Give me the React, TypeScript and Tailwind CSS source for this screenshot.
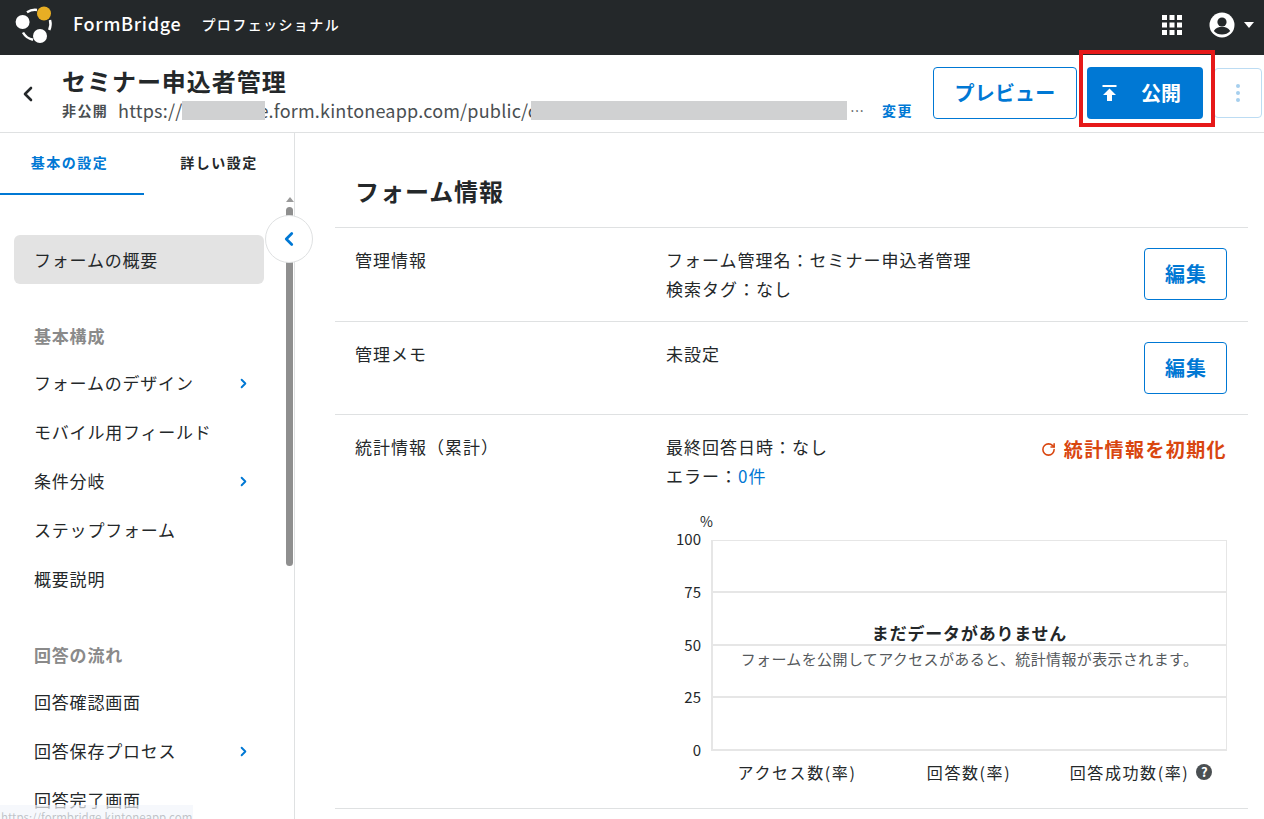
import { ChevronLeft, ChevronRight, RotateCw } from "lucide-react";

const blue = "text-[#0078d4]";

function Logo() {
  return (
    <svg width="40" height="40" viewBox="0 0 40 40" className="block" fill="none">
      <path d="M12 7.200A15 15 0 0 1 22 5" stroke="#fff" strokeWidth="2.500" />
      <path d="M35 15A15 15 0 0 1 34.200 25" stroke="#fff" strokeWidth="2.500" />
      <path d="M8 27.500A15 15 0 0 0 18 34.800" stroke="#fff" strokeWidth="2.500" />
      <circle cx="29" cy="8.500" r="7" fill="#e8ae24" />
      <circle cx="7.600" cy="17" r="7" fill="#fff" />
      <circle cx="25" cy="31" r="7" fill="#fff" />
    </svg>
  );
}

function GridIcon() {
  return (
    <svg width="20" height="20" viewBox="0 0 20 20" fill="#fff" className="block">
      {[0, 7.5, 15].map((x) =>
        [0, 7.5, 15].map((y) => <rect key={`${x}-${y}`} x={x} y={y} width="5" height="5" />)
      )}
    </svg>
  );
}

function UserIcon() {
  return (
    <svg width="26" height="26" viewBox="0 0 26 26" className="block">
      <circle cx="13" cy="13" r="12.5" fill="#fff" />
      <circle cx="13" cy="10" r="4.6" fill="#24282a" />
      <path d="M4.8 19c1.8-3 5-4.2 8.2-4.2s6.400 1.200 8.200 4.200c-2 2.300-5 3.600-8.200 3.600s-6.200-1.300-8.200-3.600z" fill="#24282a" />
    </svg>
  );
}

function Nav({ label, arrow }: { label: string; arrow?: boolean }) {
  return (
    <div className="h-[49px] pl-5 pr-[13px] flex items-center justify-between text-[17px] tracking-[0.8px] text-[#24282a]">
      <span>{label}</span>
      {arrow && <ChevronRight size={15} strokeWidth={3} className={`mt-[1px] ${blue}`} />}
    </div>
  );
}

function SectionHead({ label }: { label: string }) {
  return <div className="mt-[31px] h-[43px] pl-5 pb-[1px] flex items-center text-[17px] font-bold tracking-[0.8px] text-[#8a8a8a]">{label}</div>;
}

function EditButton() {
  return (
    <button className={`w-[83px] h-[52px] shrink-0 rounded border border-[#0078d4] bg-white pl-[1px] text-xl font-bold tracking-[0.05em] ${blue}`}>編集</button>
  );
}

function Sidebar() {
  return (
    <aside className="relative w-[295px] shrink-0 border-r border-[#dfe1e2]">
      <div className="flex h-[62px] text-sm font-bold">
        <div className={`w-[144px] border-b-2 border-[#0078d4] flex items-center justify-center pb-[3px] pr-[5px] tracking-[0.11em] ${blue}`}>基本の設定</div>
        <div className="w-[150px] flex items-center justify-center pb-1 tracking-[0.11em] text-[#24282a]">詳しい設定</div>
      </div>
      <div className="pt-10 pl-[14px] pr-[30px]">
        <div className="rounded-md bg-[#e3e3e3]">
          <Nav label="フォームの概要" />
        </div>
        <SectionHead label="基本構成" />
        <Nav label="フォームのデザイン" arrow />
        <Nav label="モバイル用フィールド" />
        <Nav label="条件分岐" arrow />
        <Nav label="ステップフォーム" />
        <Nav label="概要説明" />
        <SectionHead label="回答の流れ" />
        <Nav label="回答確認画面" />
        <Nav label="回答保存プロセス" arrow />
        <Nav label="回答完了画面" />
      </div>

      <div className="absolute left-[286px] top-[64px] w-0 h-0 border-x-[4px] border-x-transparent border-b-[5px] border-b-[#9a9a9a]" />
      <div className="absolute left-[286px] top-[74px] w-[7px] h-[359px] rounded-full bg-[#8f8f8f]" />
      <div className="absolute left-[265px] top-[82px] w-12 h-12 rounded-full bg-white border border-[#dfe1e2] flex items-center justify-center">
        <ChevronLeft size={22} strokeWidth={3} className={blue} />
      </div>
    </aside>
  );
}

function Chart() {
  return (
    <div className="mt-[21px] pr-[21px]">
      <div className="h-[18px] flex items-center pl-[34px] text-sm leading-none tracking-normal text-[#24282a]">%</div>
      <div className="flex mt-[10px]">
        <div className="w-[45px] h-[211px] flex flex-col justify-between items-end pr-[10px] text-[15px] tracking-normal text-[#24282a]">
          {["100", "75", "50", "25", "0"].map((v) => (
            <div key={v} className="h-0 flex items-center">{v}</div>
          ))}
        </div>
        <div className="relative flex-1 h-[211px] border-2 border-[#e6e6e6] border-t-[1px] border-r-[1px] flex flex-col">
          <div className="flex-1 border-b-2 border-[#e6e6e6]" />
          <div className="flex-1 border-b-2 border-[#e6e6e6]" />
          <div className="flex-1 border-b-2 border-[#e6e6e6]" />
          <div className="flex-1" />
          <div className="absolute inset-x-0 top-[80px] text-center">
            <div className="text-[17px] leading-6 font-bold tracking-[0.8px] text-[#24282a]">まだデータがありません</div>
            <div className="mt-[2px] text-[15px] leading-6 tracking-[0.38px] whitespace-nowrap text-[#55595c]">フォームを公開してアクセスがあると、統計情報が表示されます。</div>
          </div>
        </div>
      </div>
      <div className="ml-[45px] mt-[9px] grid grid-cols-3 text-base leading-6 tracking-[0.1em] text-[#24282a]">
        <div className="text-center">アクセス数(率)</div>
        <div className="text-center">回答数(率)</div>
        <div className="flex items-center justify-center gap-[7px]">
          <span>回答成功数(率)</span>
          <span className="w-4 h-4 rounded-full bg-[#4a4f52] text-white text-[13px] font-bold leading-4 tracking-normal text-center">?</span>
        </div>
      </div>
    </div>
  );
}

function Main() {
  return (
    <main className="flex-1 pl-10 pr-4 min-w-0">
      <h1 className="h-[95px] pl-5 pt-[39px] text-2xl leading-[38px] font-bold tracking-[0.04em] text-[#24282a] border-b border-[#dfe1e2]">フォーム情報</h1>
      <section className="h-[94px] flex pl-5 border-b border-[#dfe1e2] text-[17px] leading-[28.8px] tracking-[1px] text-[#24282a]">
        <div className="w-[311px] pt-[18px]">管理情報</div>
        <div className="flex-1 pt-[18px]">
          <div>フォーム管理名：セミナー申込者管理</div>
          <div>検索タグ：なし</div>
        </div>
        <div className="pt-5 pr-[21px]"><EditButton /></div>
      </section>
      <section className="h-[93px] flex pl-5 border-b border-[#dfe1e2] text-[17px] leading-[28.8px] tracking-[1px] text-[#24282a]">
        <div className="w-[311px] pt-[18px]">管理メモ</div>
        <div className="flex-1 pt-[18px]">未設定</div>
        <div className="pt-5 pr-[21px]"><EditButton /></div>
      </section>
      <section className="h-[394px] flex pl-5 border-b border-[#dfe1e2] text-[17px] leading-[28.8px] tracking-[1px] text-[#24282a]">
        <div className="w-[311px] pt-[18px]">統計情報（累計）</div>
        <div className="flex-1 pt-[18px]">
          <div className="flex justify-between pr-[21px]">
            <div>
              <div>最終回答日時：なし</div>
              <div>エラー：<span className={blue}>0件</span></div>
            </div>
            <div className="flex items-center gap-[8px] h-[32px] text-[19px] font-bold tracking-[1.4px] text-[#d9460f]">
              <RotateCw size={15} strokeWidth={2.5} />
              <span>統計情報を初期化</span>
            </div>
          </div>
          <Chart />
        </div>
      </section>
    </main>
  );
}

export default function App() {
  return (
    <div className="relative h-[819px] overflow-hidden bg-white flex flex-col font-['Noto_Sans_CJK_JP','Noto_Sans',sans-serif]">
      <header className="h-[55px] shrink-0 bg-[#24282a] flex items-center pl-[15px] pr-[10px] pb-[5px] text-white">
        <Logo />
        <span className="ml-[18px] mb-[4px] text-lg font-medium tracking-[0.7px]">FormBridge</span>
        <span className="ml-5 mb-[2px] text-sm font-medium tracking-[0.1em]">プロフェッショナル</span>
        <div className="ml-auto flex items-center">
          <GridIcon />
          <div className="ml-[27px]"><UserIcon /></div>
          <div className="ml-[9px] w-0 h-0 border-x-[5px] border-x-transparent border-t-[6px] border-t-white" />
        </div>
      </header>

      <div className="h-[78px] shrink-0 flex items-center border-b border-[#dfe1e2] pl-5 pr-[2px]">
        <ChevronLeft size={24} strokeWidth={2.6} className="-ml-[4px] text-[#24282a]" />
        <div className="ml-[22px] w-[851px] min-w-0 pt-[3px]">
          <div className="text-2xl leading-[30px] font-bold tracking-[0.04em] text-[#24282a]">セミナー申込者管理</div>
          <div className="flex items-center h-[28px] text-[#4a4f52] whitespace-nowrap">
            <span className="w-[56px] shrink-0 text-sm font-bold tracking-[1.400px] text-[#4a4f52]">非公開</span>
            <span className="shrink-0 text-lg leading-none tracking-[0.2px]">https://</span>
            <span className="relative z-10 w-[83px] h-[19px] shrink-0 bg-[#d0d1d2]" />
            <span className="-ml-[7px] shrink-0 text-lg leading-none tracking-[0.2px]">e.form.kintoneapp.com/public/c</span>
            <span className="relative z-10 -ml-[6px] w-[316px] h-[19px] bg-[#d0d1d2] shrink-0" />
            <span className="ml-auto shrink-0 text-sm">⋯</span>
            <span className={`ml-[18px] shrink-0 text-sm font-bold tracking-[1.5px] ${blue}`}>変更</span>
          </div>
        </div>
        <button className={`ml-5 mb-[1px] w-[144px] h-[52px] rounded border border-[#0078d4] bg-white text-xl font-bold tracking-[0.2px] ${blue}`}>プレビュー</button>
        <button className="ml-[10px] mb-[1px] w-[116px] h-[52px] rounded bg-[#0078d4] text-white text-xl font-bold flex items-center pl-[15px]">
          <svg width="15" height="16" viewBox="0 0 15 16" fill="#fff" className="block">
            <rect x="0.500" y="0" width="14" height="2" />
            <path d="M7.500 3.500L14 10H10V16H5V10H1z" />
          </svg>
          <span className="ml-[24px]">公開</span>
        </button>
        <button className="ml-[11px] mb-[1px] w-[48px] h-[50px] rounded border border-[#bcdcf3] bg-white flex flex-col items-center justify-center gap-[3px]">
          <span className="w-1 h-1 rounded-full bg-[#a6cfee]" />
          <span className="w-1 h-1 rounded-full bg-[#a6cfee]" />
          <span className="w-1 h-1 rounded-full bg-[#a6cfee]" />
        </button>
      </div>

      <div className="flex flex-1 min-h-0">
        <Sidebar />
        <Main />
      </div>

      <div className="absolute left-[1079px] top-[50px] w-[136px] h-[77px] border-4 border-[#e61919] pointer-events-none" />
      <div className="absolute left-0 bottom-0 w-[193px] h-[14px] bg-[#f2f5fb]/70 pl-px pt-[5px] text-[11.5px] leading-[14px] text-[#9aa0a6]/60 whitespace-nowrap overflow-hidden">https://formbridge.kintoneapp.com</div>
    </div>
  );
}
